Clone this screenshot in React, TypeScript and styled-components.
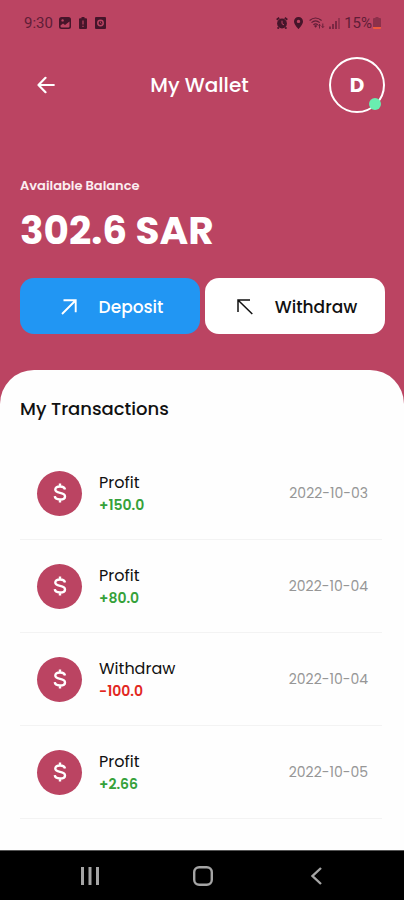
import React from "react";
import styled, { createGlobalStyle } from "styled-components";

const rose = "#bb4462";

const GlobalStyle = createGlobalStyle`
  *, *::before, *::after { box-sizing: border-box; }
  body { margin: 0; background: ${rose}; font-family: Poppins, Inter, sans-serif; }
  button { font: inherit; border: 0; padding: 0; background: none; cursor: pointer; }
  svg { display: block; flex: none; }
`;

const Page = styled.div`
  display: flex;
  flex-direction: column;
  min-height: 100vh;
  background: ${rose};
`;

const StatusBar = styled.div`
  display: flex;
  align-items: center;
  justify-content: space-between;
  height: 45px;
  padding: 0 23px 0 24px;
  color: #45152a;
`;

const StatusGroup = styled.div<{ $gap: number }>`
  display: flex;
  align-items: center;
  gap: ${(p) => p.$gap}px;
`;

const StatusText = styled.span`
  color: #601d37;
  font: 400 15px/20px Roboto, sans-serif;
`;

const StatusIcons = styled.div<{ $gap: number }>`
  display: flex;
  align-items: center;
  gap: ${(p) => p.$gap}px;
`;

const Battery = styled.div`
  display: flex;
  align-items: center;
  gap: 1px;
`;

const Header = styled.header`
  display: grid;
  grid-template-columns: 56px 1fr 60px;
  align-items: center;
  padding: 12px 19px 0 18px;
  color: #fff;
`;

const BackButton = styled.button`
  display: grid;
  place-items: center;
  height: 56px;
  color: #fff;
`;

const Title = styled.h1`
  margin: 0;
  text-align: center;
  font-size: 20px;
  line-height: 28px;
  font-weight: 500;
`;

const Avatar = styled.button`
  position: relative;
  justify-self: end;
  width: 56px;
  height: 56px;
  border: 2px solid #fff;
  border-radius: 50%;
  color: #fff;
  font-size: 20px;
  font-weight: 700;
`;

const OnlineDot = styled.span`
  position: absolute;
  right: 2px;
  bottom: 1px;
  width: 12px;
  height: 12px;
  border-radius: 50%;
  background: #69edb0;
`;

const Balance = styled.section`
  padding: 63px 19px 36px 20px;
  color: #fff;
`;

const BalanceLabel = styled.p`
  margin: 0;
  font-size: 13px;
  line-height: 20px;
  font-weight: 600;
  color: #fbeef1;
`;

const Amount = styled.p`
  margin: 10px 0 0;
  font-size: 39px;
  line-height: 50px;
  font-weight: 700;
`;

const Actions = styled.div`
  display: grid;
  grid-template-columns: 1fr 1fr;
  gap: 5px;
  margin-top: 22px;
`;

const ActionButton = styled.button<{ $primary?: boolean }>`
  display: flex;
  align-items: center;
  justify-content: center;
  gap: 22px;
  height: 56px;
  padding: 1px 0 0 4px;
  border-radius: 14px;
  background: ${(p) => (p.$primary ? "#2196f3" : "#fff")};
  color: ${(p) => (p.$primary ? "#fff" : "#111")};
  font-size: 17px;
  line-height: 24px;
  font-weight: 500;
`;

const Sheet = styled.main`
  flex: 1;
  padding: 27px 22px 30px 20px;
  border-radius: 34px 34px 0 0;
  background: #fefefe;
`;

const SheetTitle = styled.h2`
  margin: 0 0 26px;
  color: #111;
  font-size: 18px;
  line-height: 24px;
  font-weight: 500;
`;

const List = styled.ul`
  margin: 0;
  padding: 0;
  list-style: none;
`;

const Row = styled.li`
  display: flex;
  align-items: center;
  gap: 17px;
  height: 93px;
  padding: 0 14px 0 17px;
  border-bottom: 1px solid #f3f3f3;
`;

const Coin = styled.span`
  display: grid;
  place-items: center;
  width: 45px;
  height: 45px;
  border-radius: 50%;
  background: ${rose};
  color: #fff;
`;

const Details = styled.div`
  flex: 1;
`;

const Kind = styled.div`
  color: #111;
  font-size: 16px;
  line-height: 24px;
`;

const Value = styled.div<{ $negative: boolean }>`
  color: ${(p) => (p.$negative ? "#e2281f" : "#35a13a")};
  font-size: 14px;
  line-height: 20px;
  font-weight: 600;
`;

const DateText = styled.time`
  color: #969696;
  font-size: 14px;
  line-height: 20px;
`;

const NavBar = styled.nav`
  display: grid;
  grid-template-columns: repeat(3, 1fr);
  height: 50px;
  padding: 0 31px 0 33px;
  border-top: 1px solid #555;
  background: #000;
`;

const NavButton = styled.button`
  display: grid;
  place-items: center;
  color: #a5a5a5;
`;

const transactions = [
  { kind: "Profit", value: "+150.0", date: "2022-10-03" },
  { kind: "Profit", value: "+80.0", date: "2022-10-04" },
  { kind: "Withdraw", value: "-100.0", date: "2022-10-04" },
  { kind: "Profit", value: "+2.66", date: "2022-10-05" },
];

const PictureIcon = () => (
  <svg width="12" height="12" viewBox="0 0 12 12">
    <rect width="12" height="12" rx="2.5" fill="currentColor" />
    <path d="M1.5 8.5 4 6.5l2 1.5 4.5-3.5v4.8q0 1.2-1.2 1.2H2.7q-1.2 0-1.2-1.2z" fill={rose} />
    <circle cx="3.6" cy="3.4" r="1.2" fill={rose} />
  </svg>
);

const BatteryAlertIcon = () => (
  <svg width="8" height="12" viewBox="0 0 8 12">
    <path d="M2.5 0h3v1.2H7q1 0 1 1V11q0 1-1 1H1q-1 0-1-1V2.2q0-1 1-1h1.5z" fill="currentColor" />
    <path d="M4 3.5v4M4 8.7v1.2" stroke={rose} strokeWidth="1.2" />
  </svg>
);

const ClockBoxIcon = () => (
  <svg width="11" height="12" viewBox="0 0 11 12" fill="none">
    <rect width="11" height="12" rx="1" fill="currentColor" />
    <circle cx="5.5" cy="6" r="2.7" stroke={rose} strokeWidth="1.5" />
    <path d="M5.5 4.5V6l1 .6" stroke={rose} strokeWidth=".8" />
  </svg>
);

const AlarmIcon = () => (
  <svg width="12" height="12" viewBox="0 0 12 12" fill="none">
    <circle cx="6" cy="6.5" r="4.9" fill="currentColor" />
    <path d="m.7 2.8 2.5-2M11.3 2.8l-2.5-2M2.8 10.3l-1.2 1.4M9.2 10.3l1.2 1.4" stroke="currentColor" strokeWidth="1.8" />
    <path d="M6 3.7v3l2 1.2" stroke={rose} strokeWidth="1" />
  </svg>
);

const PinIcon = () => (
  <svg width="9" height="12" viewBox="0 0 9 12">
    <path fillRule="evenodd" d="M4.5 0A4.4 4.4 0 0 1 9 4.4C9 7.6 4.5 12 4.5 12S0 7.6 0 4.4A4.4 4.4 0 0 1 4.5 0zm0 2.7a1.7 1.7 0 1 0 0 3.4 1.7 1.7 0 0 0 0-3.4z" fill="currentColor" />
  </svg>
);

const WifiIcon = () => (
  <svg width="16" height="12" viewBox="0 0 16 12" fill="none" stroke="#601d37" strokeWidth="1.2">
    <path d="M.6 3.5Q6.5-1.5 12.6 3.5M2.5 5.6q4-3.4 8.2 0M4.4 7.7q2.2-1.8 4.4 0" />
    <path d="m5.6 8.6 1 1.2 1-1.2" fill="currentColor" />
    <path d="M10.5 11.5v-4M9.3 8.6l1.2-1.3 1.2 1.3M13.8 6.5v4M12.6 9.3l1.2 1.3L15 9.3" strokeWidth=".9" />
  </svg>
);

const SignalIcon = () => (
  <svg width="11" height="12" viewBox="0 0 11 12" stroke="#601d37">
    <path d="M1 9.5V12M4 7v5M7 4v8" strokeWidth="1.4" />
    <path d="M10 1v11" strokeWidth="1.4" opacity=".6" />
  </svg>
);

const BatteryIcon = () => (
  <svg width="8" height="12" viewBox="0 0 8 12">
    <path d="M2.5 0h3v1H7q1 0 1 1v8H0V2q0-1 1-1h1.5z" fill="#45152a" opacity=".4" />
    <path d="M0 10h8v1q0 1-1 1H1q-1 0-1-1z" fill="#ef5a3c" />
  </svg>
);

const BackIcon = () => (
  <svg width="18" height="18" viewBox="0 0 18 18" fill="none" stroke="currentColor" strokeWidth="2.2" strokeLinecap="round" strokeLinejoin="round">
    <path d="M16.8 9H1.5M8.5 1.8 1.5 9l7 7.2" />
  </svg>
);

const DepositIcon = () => (
  <svg width="16" height="16" viewBox="0 0 16 16" fill="none" stroke="currentColor" strokeWidth="1.9">
    <path d="M1 15 14.5 1.5M2.5 1.3h12.2v12" />
  </svg>
);

const WithdrawIcon = () => (
  <svg width="16" height="16" viewBox="0 0 16 16" fill="none" stroke="currentColor" strokeWidth="1.5">
    <path d="M15.3 15 1.2 1.2M13 1H1v12" />
  </svg>
);

const DollarIcon = () => (
  <svg width="14" height="20" viewBox="0 0 14 20" fill="none" stroke="currentColor" strokeWidth="2.4">
    <path d="M12 6.5C11.6 4.5 9.8 3.5 7 3.5c-3 0-4.7 1.2-4.7 3C2.3 8.6 4 9.3 7 9.9c3.1.6 5 1.4 5 3.5 0 2-2 3.1-5 3.1s-5-1.2-5.2-3.3M7 .5v3M7 16.5v3" />
  </svg>
);

export default function App() {
  return (
    <>
      <GlobalStyle />
      <Page>
        <StatusBar>
          <StatusGroup $gap={6}>
            <StatusText>9:30</StatusText>
            <StatusIcons $gap={8}>
              <PictureIcon />
              <BatteryAlertIcon />
              <ClockBoxIcon />
            </StatusIcons>
          </StatusGroup>
          <StatusGroup $gap={4}>
            <StatusIcons $gap={6}>
              <AlarmIcon />
              <PinIcon />
              <WifiIcon />
            </StatusIcons>
            <SignalIcon />
            <Battery>
              <StatusText>15%</StatusText>
              <BatteryIcon />
            </Battery>
          </StatusGroup>
        </StatusBar>

        <Header>
          <BackButton aria-label="Back">
            <BackIcon />
          </BackButton>
          <Title>My Wallet</Title>
          <Avatar aria-label="Profile">
            D
            <OnlineDot />
          </Avatar>
        </Header>

        <Balance>
          <BalanceLabel>Available Balance</BalanceLabel>
          <Amount>302.6 SAR</Amount>
          <Actions>
            <ActionButton $primary>
              <DepositIcon />
              Deposit
            </ActionButton>
            <ActionButton>
              <WithdrawIcon />
              Withdraw
            </ActionButton>
          </Actions>
        </Balance>

        <Sheet>
          <SheetTitle>My Transactions</SheetTitle>
          <List>
            {transactions.map((t) => (
              <Row key={t.date + t.value}>
                <Coin>
                  <DollarIcon />
                </Coin>
                <Details>
                  <Kind>{t.kind}</Kind>
                  <Value $negative={t.value.startsWith("-")}>{t.value}</Value>
                </Details>
                <DateText dateTime={t.date}>{t.date}</DateText>
              </Row>
            ))}
          </List>
        </Sheet>

        <NavBar aria-label="System">
          <NavButton aria-label="Recent apps">
            <svg width="18" height="18" viewBox="0 0 18 18" stroke="currentColor" strokeWidth="3">
              <path d="M1.5 0v18M9 0v18M16.5 0v18" />
            </svg>
          </NavButton>
          <NavButton aria-label="Home">
            <svg width="20" height="20" viewBox="0 0 20 20" fill="none" stroke="currentColor" strokeWidth="2.4">
              <rect x="1.2" y="1.2" width="17.6" height="17.6" rx="5" />
            </svg>
          </NavButton>
          <NavButton aria-label="Back to previous screen">
            <svg width="11" height="18" viewBox="0 0 11 18" fill="none" stroke="currentColor" strokeWidth="2.4">
              <path d="M10 1 1.5 9l8.5 8" />
            </svg>
          </NavButton>
        </NavBar>
      </Page>
    </>
  );
}
